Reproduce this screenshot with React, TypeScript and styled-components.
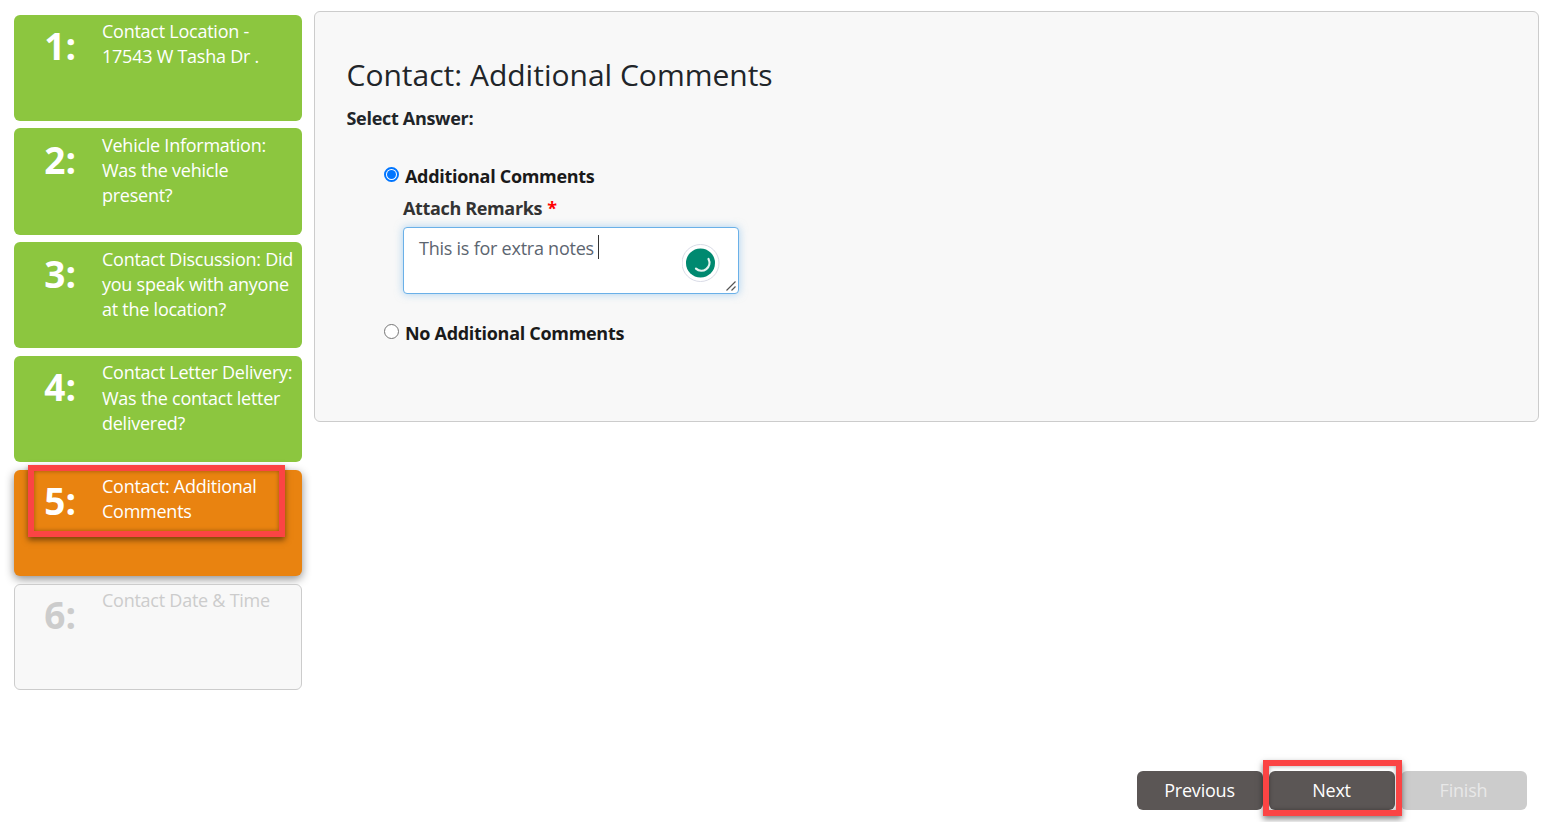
import styled, { createGlobalStyle } from "styled-components";

const GlobalStyle = createGlobalStyle`
    html, body {
        margin: 0;
        padding: 0;
        background: #fff;
        overflow: hidden;
    }
    * {
        box-sizing: border-box;
    }
    body {
        font-family: "Open Sans", "Liberation Sans", sans-serif;
        color: #212529;
    }
`

const Page = styled.div`
    display: flex;
    gap: 12px;
    height: 822px;
    padding: 11px 13px 0 14px;
`

const Sidebar = styled.div`
    width: 288px;
    flex: none;
    padding-top: 3.6px;
    display: flex;
    flex-direction: column;
    gap: 7.6px;
`

type StepState = "done" | "active" | "todo";

const stepBackground = { done: "#8cc63f", active: "#e98310", todo: "#f8f8f8" };

const Step = styled.div<{ $state: StepState }>`
    position: relative;
    height: 106.2px;
    border-radius: 6px;
    display: flex;
    background: ${(p) => stepBackground[p.$state]};
    color: ${(p) => (p.$state === "todo" ? "#cccccc" : "#fff")};
    border: ${(p) => (p.$state === "todo" ? "1px solid #cccccc" : "none")};
    box-shadow: ${(p) => (p.$state === "active" ? "0 3px 10px rgba(0,0,0,0.45)" : "none")};
`

const StepNumber = styled.div<{ $state: StepState }>`
    width: ${(p) => (p.$state === "todo" ? "87px" : "88px")};
    flex: none;
    padding: ${(p) => (p.$state === "todo" ? "6px 26px 0 0" : "7.5px 26px 0 0")};
    text-align: right;
    font-size: 37px;
    line-height: 48px;
    font-weight: 700;
`

const StepTitle = styled.div<{ $state: StepState }>`
    padding: ${(p) => (p.$state === "todo" ? "3px 6px 0 0" : "4.55px 6px 0 0")};
    font-size: 18px;
    line-height: 25.1px;
    letter-spacing: -0.25px;
`

const Highlight = styled.div`
    position: absolute;
    border: 6px solid #fb4444;
    box-shadow: 0 3px 6px rgba(0, 0, 0, 0.5), inset 0 0 4px rgba(0, 0, 0, 0.35);
    pointer-events: none;
`

const StepHighlight = styled(Highlight)`
    left: 14px;
    top: -5px;
    width: 257px;
    height: 72px;
`

const Main = styled.div`
    flex: 1;
    display: flex;
    flex-direction: column;
`

const Panel = styled.div`
    height: 411px;
    background: #f8f8f8;
    border: 1px solid #cccccc;
    border-radius: 6px;
    padding: 43px 31.5px 0;
`

const Heading = styled.h1`
    margin: 0;
    font-size: 30px;
    line-height: 40px;
    font-weight: 400;
    color: #212529;
`

const Prompt = styled.div`
    margin-top: 11px;
    font-size: 18px;
    line-height: 24px;
    font-weight: 700;
    letter-spacing: -0.3px;
`

const Options = styled.div`
    padding: 34px 0 0 37.5px;
    display: flex;
    flex-direction: column;
`

const OptionRow = styled.label`
    display: flex;
    align-items: center;
    gap: 6px;
    height: 24px;
    font-size: 18px;
    font-weight: 700;
    letter-spacing: -0.3px;
    color: #1a1a1a;
`

const Radio = styled.span<{ $checked?: boolean }>`
    width: 15px;
    height: 15px;
    flex: none;
    margin-top: -3px;
    border-radius: 50%;
    background: #fff;
    border: ${(p) => (p.$checked ? "2px solid #0075ff" : "1px solid #767676")};
    display: flex;
    align-items: center;
    justify-content: center;

    &::after {
        content: "";
        display: ${(p) => (p.$checked ? "block" : "none")};
        width: 9px;
        height: 9px;
        border-radius: 50%;
        background: #0075ff;
    }
`

const Remarks = styled.div`
    padding: 8px 0 27px 19px;
`

const RemarksLabel = styled.div`
    font-size: 18px;
    line-height: 24px;
    font-weight: 700;
    letter-spacing: -0.35px;
    color: #333;
`

const Required = styled.span`
    color: #ff0000;
    margin-left: 5px;
`

const TextBox = styled.div`
    position: relative;
    margin-top: 7px;
    width: 336px;
    height: 67px;
    background: #fff;
    border: 1px solid #6ab0e8;
    border-radius: 4px;
    box-shadow: 0 0 8px rgba(106, 176, 232, 0.55);
    padding: 7px 15px;
    font-size: 18px;
    line-height: 26px;
    letter-spacing: -0.24px;
    color: #5c6570;
    display: flex;
    align-items: flex-start;
`

const Caret = styled.span`
    width: 1px;
    height: 24px;
    margin-left: 4px;
    background: #333;
`

const SpinnerBadge = styled.svg`
    position: absolute;
    right: 18px;
    top: 16px;
`

const ResizeGrip = styled.svg`
    position: absolute;
    right: 1px;
    bottom: 1px;
`

const Footer = styled.div`
    position: relative;
    margin-top: 349px;
    padding-right: 12px;
    display: flex;
    justify-content: flex-end;
    gap: 6px;
`

const ActionButton = styled.button<{ $disabled?: boolean }>`
    width: 126px;
    height: 39px;
    border: 0;
    border-radius: 6px;
    padding: 0 1px 2px 0;
    font-family: inherit;
    font-size: 18px;
    letter-spacing: -0.2px;
    color: ${(p) => (p.$disabled ? "#e8e8e8" : "#fff")};
    background: ${(p) => (p.$disabled ? "#cccccc" : "#5b5655")};
`

const NextHighlight = styled(Highlight)`
    right: 137px;
    top: -11px;
    width: 139px;
    height: 56px;
`

const steps: { title: string; state: StepState }[] = [
    { title: "Contact Location - 17543 W Tasha Dr .", state: "done" },
    { title: "Vehicle Information: Was the vehicle present?", state: "done" },
    { title: "Contact Discussion: Did you speak with anyone at the location?", state: "done" },
    { title: "Contact Letter Delivery: Was the contact letter delivered?", state: "done" },
    { title: "Contact: Additional Comments", state: "active" },
    { title: "Contact Date & Time", state: "todo" },
];

export default function App() {
    return (
        <>
            <GlobalStyle />
            <Page>
                <Sidebar>
                    {steps.map((step, i) => (
                        <Step key={step.title} $state={step.state}>
                            <StepNumber $state={step.state}>{i + 1}:</StepNumber>
                            <StepTitle $state={step.state}>{step.title}</StepTitle>
                            {step.state === "active" && <StepHighlight />}
                        </Step>
                    ))}
                </Sidebar>
                <Main>
                    <Panel>
                        <Heading>Contact: Additional Comments</Heading>
                        <Prompt>Select Answer:</Prompt>
                        <Options>
                            <OptionRow>
                                <Radio $checked />
                                Additional Comments
                            </OptionRow>
                            <Remarks>
                                <RemarksLabel>
                                    Attach Remarks<Required>*</Required>
                                </RemarksLabel>
                                <TextBox>
                                    This is for extra notes
                                    <Caret />
                                    <SpinnerBadge width="38" height="38" viewBox="0 0 38 38">
                                        <circle cx="18.5" cy="19" r="18.5" fill="#fff" stroke="#d9dbe6" />
                                        <circle cx="18.5" cy="19" r="14.5" fill="#008970" />
                                        <path d="M26.5 15a8 8 0 0 1-12.5 9.6" fill="none" stroke="#e4f3ef" strokeWidth="2.2" strokeLinecap="round" />
                                    </SpinnerBadge>
                                    <ResizeGrip width="12" height="12" viewBox="0 0 12 12">
                                        <path d="M1.5 10.5 10.5 1.5M6.5 10.5 10.5 6.5" stroke="#555" strokeWidth="1.2" />
                                    </ResizeGrip>
                                </TextBox>
                            </Remarks>
                            <OptionRow>
                                <Radio />
                                No Additional Comments
                            </OptionRow>
                        </Options>
                    </Panel>
                    <Footer>
                        <ActionButton>Previous</ActionButton>
                        <ActionButton>Next</ActionButton>
                        <ActionButton $disabled>Finish</ActionButton>
                        <NextHighlight />
                    </Footer>
                </Main>
            </Page>
        </>
    );
}
